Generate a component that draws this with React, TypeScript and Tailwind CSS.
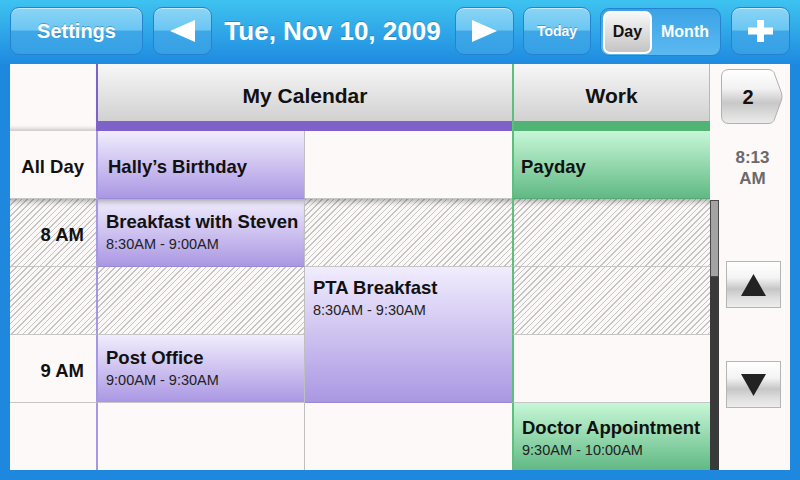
import React from "react";

const glossy =
  "flex items-center justify-center h-[48px] rounded-[9px] border border-[#2582cf] bg-[image:linear-gradient(to_bottom,#8bd5f6_0%,#6ac6f2_48%,#3fa7e8_50%,#35a0e5_100%)] shadow-[inset_0_1px_0_rgba(255,255,255,0.5)]";
const hatch =
  "bg-[image:repeating-linear-gradient(135deg,#c4c4c4_0px,#c4c4c4_1px,#fbf8f7_1px,#fbf8f7_4px)]";
const purple = "bg-[image:linear-gradient(to_bottom,#f1edfd,#aa97e3)]";
const green = "bg-[image:linear-gradient(to_bottom,#c7f7d7,#61b984)]";
const headerBg = "bg-[image:linear-gradient(to_bottom,#f7f7f7,#d1d1d1)]";
const topShadow = "shadow-[inset_0_7px_6px_-5px_rgba(0,0,0,0.35)]";
const greyButton =
  "flex items-center justify-center w-[55px] h-[47px] ml-[7px] border border-[#b5b5b5] bg-[image:linear-gradient(to_bottom,#ffffff_0%,#f4f4f4_35%,#c6c6c6_60%,#dedede_80%,#ededed_100%)]";

function EventBlock({ title, time, className }: { title: string; time: string; className: string }) {
  return (
    <div className={`flex flex-col pl-[8px] whitespace-nowrap overflow-hidden ${className}`}>
      <span className="text-[18.5px] leading-[21px] font-bold text-[#111]">{title}</span>
      <span className="mt-[3px] text-[14.5px] leading-[18px] text-[#222]">{time}</span>
    </div>
  );
}

export default function App() {
  return (
    <div className="w-[800px] h-[480px] flex flex-col bg-[#1e88de] font-['Liberation_Sans',Arial,sans-serif]">
      {/* top toolbar */}
      <div className="h-[64px] flex items-start pt-[7px] pl-[10px] bg-[image:linear-gradient(to_bottom,#3ec3f0,#1f8ae0)]">
        <button className={`${glossy} w-[133px]`}>
          <span className="text-[20px] font-bold text-white [text-shadow:0_-1px_0_rgba(0,0,0,0.25)]">Settings</span>
        </button>
        <button className={`${glossy} w-[59px] ml-[10px]`}>
          <svg width="25" height="22" viewBox="0 0 25 22">
            <polygon points="0,11 25,0 25,22" fill="#fff" />
          </svg>
        </button>
        <div className="w-[241px] h-[48px] flex items-center justify-center text-[26px] font-bold text-white [text-shadow:0_-1px_0_rgba(0,0,0,0.2)]">
          Tue, Nov 10, 2009
        </div>
        <button className={`${glossy} w-[59px] ml-[2px]`}>
          <svg width="25" height="22" viewBox="0 0 25 22">
            <polygon points="0,0 25,11 0,22" fill="#fff" />
          </svg>
        </button>
        <button className={`${glossy} w-[68px] ml-[9px]`}>
          <span className="text-[14px] font-bold text-white [text-shadow:0_-1px_0_rgba(0,0,0,0.25)]">Today</span>
        </button>
        <div className="ml-[9px] mt-[1px] w-[121px] h-[48px] flex items-center rounded-[9px] border border-[#2582cf] bg-[image:linear-gradient(to_bottom,#3aa3e7,#5cbaf0)] px-[2px]">
          <div className="w-[49px] h-[43px] flex items-center justify-center rounded-[7px] border-2 border-white bg-[image:linear-gradient(to_bottom,#f7f7f7,#c4c4c4)] text-[16px] font-bold text-[#111]">
            Day
          </div>
          <div className="flex-1 text-center text-[16px] font-bold text-white">Month</div>
        </div>
        <button className={`${glossy} w-[59px] ml-[10px]`}>
          <svg width="25" height="22" viewBox="0 0 25 22">
            <rect x="0" y="7.5" width="25" height="7" fill="#fff" />
            <rect x="9" y="0" width="7" height="22" fill="#fff" />
          </svg>
        </button>
      </div>

      {/* calendar panel */}
      <div className="mx-[10px] h-[406px] flex bg-[#fdf9f8]">
        <div className="grid grid-cols-[88px_207px_207px_198px] grid-rows-[67px_68px_68px_68px_68px_67px]">
          {/* header */}
          <div className="col-start-1 row-start-1 border-r-2 border-[#7e62c9] bg-[#fdf9f8] shadow-[inset_0_-5px_4px_-3px_rgba(0,0,0,0.22)]" />
          <div className="col-start-2 col-span-2 row-start-1 flex flex-col">
            <div className={`flex-1 flex items-center justify-center pt-[6px] text-[21px] font-bold text-[#111] ${headerBg}`}>
              My Calendar
            </div>
            <div className="h-[10px] bg-[#7e62c9]" />
          </div>
          <div className="col-start-4 row-start-1 flex flex-col border-l-2 border-[#5cbf7c]">
            <div className={`flex-1 flex items-center justify-center pt-[6px] text-[21px] font-bold text-[#111] border-r border-[#b8b8b8] ${headerBg}`}>
              Work
            </div>
            <div className="h-[10px] bg-[#50b574]" />
          </div>

          {/* all day */}
          <div className="col-start-1 row-start-2 flex items-center justify-end pt-[5px] pr-[12px] border-r-2 border-[#a497e6] border-b border-b-[#c6c6c6] text-[18.5px] font-bold text-[#111]">
            All Day
          </div>
          <div className={`col-start-2 row-start-2 flex items-center pt-[5px] pl-[10px] border-r border-[#bfbfbf] border-b border-b-[#9b89d6] text-[18.5px] font-bold text-[#111] ${purple}`}>
            Hally’s Birthday
          </div>
          <div className="col-start-3 row-start-2 border-b border-[#c6c6c6]" />
          <div className={`col-start-4 row-start-2 flex items-center pt-[5px] pl-[7px] border-l-2 border-[#5cbf7c] border-b border-b-[#58a878] text-[18.5px] font-bold text-[#111] ${green}`}>
            Payday
          </div>

          {/* 8 AM */}
          <div className={`col-start-1 row-start-3 flex items-center justify-end pt-[5px] pr-[12px] border-r-2 border-[#a497e6] border-b border-b-[#c6c6c6] text-[18.5px] font-bold text-[#111] ${hatch} ${topShadow}`}>
            8 AM
          </div>
          <EventBlock
            title="Breakfast with Steven"
            time="8:30AM - 9:00AM"
            className={`col-start-2 row-start-3 pt-[12px] border-r border-[#bfbfbf] border-b border-b-[#9b89d6] ${purple} ${topShadow}`}
          />
          <div className={`col-start-3 row-start-3 border-b border-[#c6c6c6] ${hatch} ${topShadow}`} />
          <div className={`col-start-4 row-start-3 border-l-2 border-[#5cbf7c] border-b border-b-[#c6c6c6] ${hatch} ${topShadow}`} />

          {/* 8:30 */}
          <div className={`col-start-1 row-start-4 border-r-2 border-[#a497e6] border-b border-b-[#c6c6c6] ${hatch}`} />
          <div className={`col-start-2 row-start-4 border-r border-[#bfbfbf] border-b border-b-[#c6c6c6] ${hatch}`} />
          <EventBlock
            title="PTA Breakfast"
            time="8:30AM - 9:30AM"
            className={`col-start-3 row-start-4 row-span-2 pt-[10px] border-b border-[#9b89d6] ${purple}`}
          />
          <div className={`col-start-4 row-start-4 border-l-2 border-[#5cbf7c] border-b border-b-[#c6c6c6] ${hatch}`} />

          {/* 9 AM */}
          <div className="col-start-1 row-start-5 flex items-center justify-end pt-[4px] pr-[12px] border-r-2 border-[#a497e6] border-b border-b-[#c6c6c6] text-[18.5px] font-bold text-[#111]">
            9 AM
          </div>
          <EventBlock
            title="Post Office"
            time="9:00AM - 9:30AM"
            className={`col-start-2 row-start-5 pt-[12px] border-r border-[#bfbfbf] border-b border-b-[#c6c6c6] ${purple}`}
          />
          <div className="col-start-4 row-start-5 border-l-2 border-[#5cbf7c] border-b border-b-[#c6c6c6]" />

          {/* 9:30 */}
          <div className="col-start-1 row-start-6 border-r-2 border-[#a497e6]" />
          <div className="col-start-2 row-start-6 border-r border-[#bfbfbf]" />
          <div className="col-start-3 row-start-6" />
          <EventBlock
            title="Doctor Appointment"
            time="9:30AM - 10:00AM"
            className={`col-start-4 row-start-6 pt-[14px] border-l-2 border-[#5cbf7c] ${green}`}
          />
        </div>

        {/* right side */}
        <div className="w-[80px] flex">
          <div className="w-[9px] flex flex-col">
            <div className="h-[136px]" />
            <div className="flex-1 bg-[#3a3a3a]">
              <div className="h-[77px] bg-[#a3a3a3] border border-[#4a4a4a]" />
            </div>
          </div>
          <div className="w-[71px] flex flex-col">
            <div className="relative ml-[2px] mt-[5px] w-[62px] h-[55px]">
              <svg className="absolute inset-0" width="62" height="55" viewBox="0 0 62 55">
                <defs>
                  <linearGradient id="tabg" x1="0" y1="0" x2="0" y2="1">
                    <stop offset="0" stopColor="#ffffff" />
                    <stop offset="0.35" stopColor="#f2f2f2" />
                    <stop offset="0.62" stopColor="#c8c8c8" />
                    <stop offset="1" stopColor="#ececec" />
                  </linearGradient>
                </defs>
                <path
                  d="M8,0.5 H48 Q51,0.5 53,3.5 L60.5,24 Q61.5,27.5 60.5,31 L53,51.5 Q51,54.5 48,54.5 H8 Q0.5,54.5 0.5,47 V8 Q0.5,0.5 8,0.5 Z"
                  fill="url(#tabg)"
                  stroke="#b0b0b0"
                />
              </svg>
              <div className="absolute inset-0 flex items-center justify-center pr-[8px] text-[20px] font-bold text-[#111]">2</div>
            </div>
            <div className="mt-[23px] pr-[4px] text-center text-[17px] leading-[21px] font-bold text-[#6a6a6a]">
              8:13
              <br />
              AM
            </div>
            <div className={`${greyButton} mt-[72px]`}>
              <svg width="25" height="22" viewBox="0 0 25 22">
                <polygon points="12.5,0 25,22 0,22" fill="#222" />
              </svg>
            </div>
            <div className={`${greyButton} mt-[53px]`}>
              <svg width="25" height="22" viewBox="0 0 25 22">
                <polygon points="0,0 25,0 12.5,22" fill="#222" />
              </svg>
            </div>
          </div>
        </div>
      </div>
    </div>
  );
}
